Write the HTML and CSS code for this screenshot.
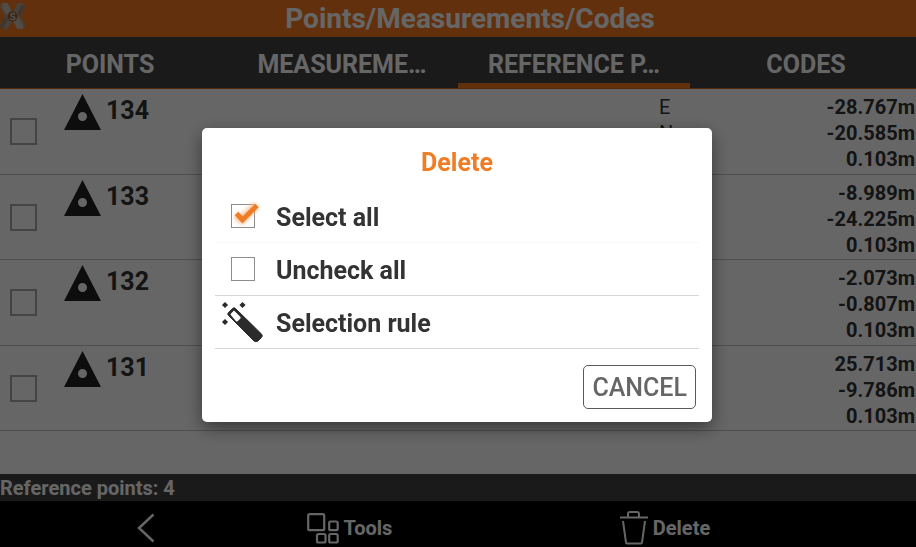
FILE: index.html
```html
<!DOCTYPE html>
<html lang="en">
<head>
<meta charset="utf-8">
<title>Points/Measurements/Codes</title>
<link rel="stylesheet" href="styles.css">
</head>
<body>
<svg class="defs" aria-hidden="true">
  <symbol id="triangle" viewBox="0 0 37 36"><path fill-rule="evenodd" d="M18.500 0L37 36H0zM18.500 18a4.500 4.500 0 1 0 0 9 4.500 4.500 0 1 0 0-9z"/></symbol>
</svg>
<div class="app">
  <header class="header">
    <svg class="logo" viewBox="0 0 26 27" aria-hidden="true">
      <path fill="#b5a293" d="M0 4L2 0H7.500L11.500 8v11L7.500 26H2L0 22 5 13.500z"/>
      <path fill="#b5a293" d="M25 4L23 0H17.500L13.500 8v11L17.500 26H23L25 22 20 13.500z"/>
      <path fill="#cbbdb2" d="M2 0H7.500L11 7 7 12 3 6zM23 26H17.500L14 20 18 14l4 7z"/>
      <path fill="#9d8775" d="M25 4L20 13.500 17 11 22 1zM0 22L5 13.500 8 16 3 26H2z"/>
      <circle cx="12.500" cy="13.500" r="5" fill="#9a6038"/>
      <path fill="none" stroke="#d8ccc2" stroke-width="1.300" d="M14.800 11.500C14 10 10.500 10.300 10.500 12c0 2 4.500 1 4.500 3.200 0 1.600-3.500 2-4.800.2"/>
    </svg>
    <h1 class="title">Points/Measurements/Codes</h1>
  </header>
  <nav class="tabs">
    <a class="tab" href="#points">POINTS</a>
    <a class="tab" href="#measurements">MEASUREME…</a>
    <a class="tab active" href="#reference" aria-current="page">REFERENCE P…</a>
    <a class="tab" href="#codes">CODES</a>
  </nav>
  <main class="list">
    <div class="row">
      <input class="box" type="checkbox" id="p134">
      <label class="name" for="p134"><svg class="tri"><use href="#triangle"/></svg>134</label>
      <div class="axes"><span>E</span><span>N</span></div>
      <div class="values"><span>-28.767m</span><span>-20.585m</span><span>0.103m</span></div>
    </div>
    <div class="row">
      <input class="box" type="checkbox" id="p133">
      <label class="name" for="p133"><svg class="tri"><use href="#triangle"/></svg>133</label>
      <div class="axes"></div>
      <div class="values"><span>-8.989m</span><span>-24.225m</span><span>0.103m</span></div>
    </div>
    <div class="row">
      <input class="box" type="checkbox" id="p132">
      <label class="name" for="p132"><svg class="tri"><use href="#triangle"/></svg>132</label>
      <div class="axes"></div>
      <div class="values"><span>-2.073m</span><span>-0.807m</span><span>0.103m</span></div>
    </div>
    <div class="row">
      <input class="box" type="checkbox" id="p131">
      <label class="name" for="p131"><svg class="tri"><use href="#triangle"/></svg>131</label>
      <div class="axes"></div>
      <div class="values"><span>25.713m</span><span>-9.786m</span><span>0.103m</span></div>
    </div>
  </main>
  <div class="status">Reference points: 4</div>
  <footer class="toolbar">
    <button class="tool" type="button" aria-label="Back">
      <svg width="18" height="30" viewBox="0 0 18 30" fill="none" stroke="#fff" stroke-width="2.500"><path d="M16.500 1.500L2 15l14.500 13.500"/></svg>
    </button>
    <button class="tool" type="button">
      <svg width="32" height="32" viewBox="0 0 32 32" fill="none" stroke="#fff" stroke-width="2.200"><rect x="1.200" y="2.200" width="16" height="16" rx="1.500"/><rect x="22.200" y="9.500" width="8.500" height="8.700" rx="1.500"/><rect x="10" y="22" width="8.500" height="8.500" rx="1.500"/><rect x="22.200" y="22" width="8.500" height="8.500" rx="1.500"/></svg>
      Tools
    </button>
    <button class="tool" type="button">
      <svg width="28" height="34" viewBox="0 0 28 34" fill="none" stroke="#fff" stroke-width="2"><path d="M0 6.500h28M8 6V3q0-2 2-2h7q2 0 2 2v3M3 10l3 21.500q0 1 1 1h14q1 0 1-1L25 10"/></svg>
      Delete
    </button>
  </footer>
</div>
<div class="scrim">
  <section class="dialog" role="dialog" aria-modal="true" aria-labelledby="dialog-title">
    <h2 class="dialog-title" id="dialog-title">Delete</h2>
    <div class="options">
      <button class="option" type="button">
        <svg class="icon" viewBox="0 0 44 44" aria-hidden="true">
          <defs><filter id="glow" x="-50%" y="-50%" width="200%" height="200%"><feGaussianBlur stdDeviation="2"/></filter></defs>
          <rect x="10.500" y="9.500" width="23" height="23" fill="#fff" stroke="#8c8c8c"/>
          <path d="M15 20l6 5L35 10" fill="none" stroke="#f9b98a" stroke-width="7" filter="url(#glow)"/>
          <path d="M15.500 18.500l6 6.500L36 10.500" fill="none" stroke="#f07c24" stroke-width="4.800"/>
        </svg>
        Select all
      </button>
      <button class="option" type="button">
        <svg class="icon" viewBox="0 0 44 44" aria-hidden="true"><rect x="10.500" y="9.500" width="23" height="23" fill="#fff" stroke="#8c8c8c"/></svg>
        Uncheck all
      </button>
      <button class="option" type="button">
        <svg class="icon" viewBox="0 0 44 44" aria-hidden="true">
          <g fill="#2b2b2b" stroke="#2b2b2b"><path d="M4 2l2 2L4 6 2 4zM21.500 2l2 2-2 2-2-2zM4 19l2 2-2 2-2-2z" stroke-width="1.500"/>
          <path d="M11.500 7.500q1.500-1.500 3 0L40.500 33q1.500 2 0 3.500l-3.500 3.500q-2 1.500-4 0L7.500 14.500q-1.500-1.500 0-3z"/></g>
          <path fill="#fff" d="M13.500 10l6 6q.5 1-.5 2l-2.500 2.200q-.8.500-1.500 0L9.800 14q-.5-.8 0-1.200l2.700-2.800q.5-.4 1 0z"/>
        </svg>
        Selection rule
      </button>
    </div>
    <div class="actions"><button class="cancel" type="button">CANCEL</button></div>
  </section>
</div>
</body>
</html>
```
FILE: styles.css
```css
* { box-sizing: border-box; }
body { margin: 0; font-family: Roboto, "Liberation Sans", sans-serif; color: #333; }
button { font: inherit; color: inherit; background: none; border: 0; padding: 0; }
h1, h2 { margin: 0; }
.defs { position: absolute; width: 0; height: 0; }

.app { display: flex; flex-direction: column; min-height: 100vh; overflow: hidden; background: #fff; }
.header { display: grid; grid-template-columns: 26px 1fr 2px; align-items: center; height: 37px; background: #f47920; color: #fff; }
.logo { width: 26px; height: 27px; margin-bottom: 4px; }
.title { text-align: center; font-size: 28px; line-height: 36px; font-weight: 700; }

.tabs { display: grid; grid-template-columns: repeat(4, 1fr); height: 52px; margin: 0 -6px; background: #434343; border-bottom: 1px solid #d9691b; }
.tab { display: flex; align-items: center; justify-content: center; padding-top: 8px; border-bottom: 5px solid transparent; color: #fff; font-size: 25px; font-weight: 700; text-decoration: none; white-space: nowrap; }
.tab.active { border-bottom-color: #f47920; }

.list { flex: 1; display: grid; grid-auto-rows: 1fr; padding-bottom: 43px; }
.row { display: grid; grid-template-columns: 54px 1fr 160px 97px; border-bottom: 1px solid #c4c4c4; padding: 5px 1px 0 10px; }
.box { appearance: none; width: 27px; height: 27px; margin: 24px 0 0; border: 2px solid #aaa; }
.name { display: flex; align-items: flex-start; gap: 5px; font-size: 25px; line-height: 34px; font-weight: 700; }
.tri { width: 37px; height: 36px; fill: #222; }
.axes, .values { display: flex; flex-direction: column; font-size: 20px; line-height: 26px; }
.axes { padding-left: 1px; }
.values { text-align: right; font-weight: 700; }

.status { height: 27px; background: #434343; color: #fff; font-size: 20px; line-height: 29px; font-weight: 700; }
.toolbar { display: grid; grid-template-columns: 169fr 313fr 296fr; align-items: center; height: 46px; padding: 7px 0 0 15%; background: #000; color: #fff; }
.tool { display: flex; align-items: center; gap: 5px; font-size: 20px; font-weight: 700; }

.scrim { position: fixed; inset: 0; display: grid; place-items: center; padding: 3px 2px 0 0; background: rgba(0, 0, 0, .6); }
.dialog { width: 510px; max-width: 100%; padding: 17px 13px 13px; border-radius: 5px; background: #fff; box-shadow: 0 6px 18px rgba(0, 0, 0, .45); }
.dialog-title { text-align: center; color: #f07c24; font-size: 25px; line-height: 36px; font-weight: 700; }
.options { margin-top: 9px; }
.option { display: flex; align-items: center; gap: 11px; width: 100%; height: 53px; padding: 2px 0 0 6px; border-bottom: 1px solid #d8d8d8; font-size: 25px; font-weight: 700; text-align: left; }
.option:first-child { border-bottom-color: #f8f8f8; }
.icon { width: 44px; height: 44px; }
.actions { display: flex; justify-content: flex-end; padding: 16px 3px 0 0; }
.cancel { height: 44px; padding: 0 8px; border: 1px solid #5a5a5a; border-radius: 5px; color: #666; font-size: 25px; font-weight: 500; }
```
